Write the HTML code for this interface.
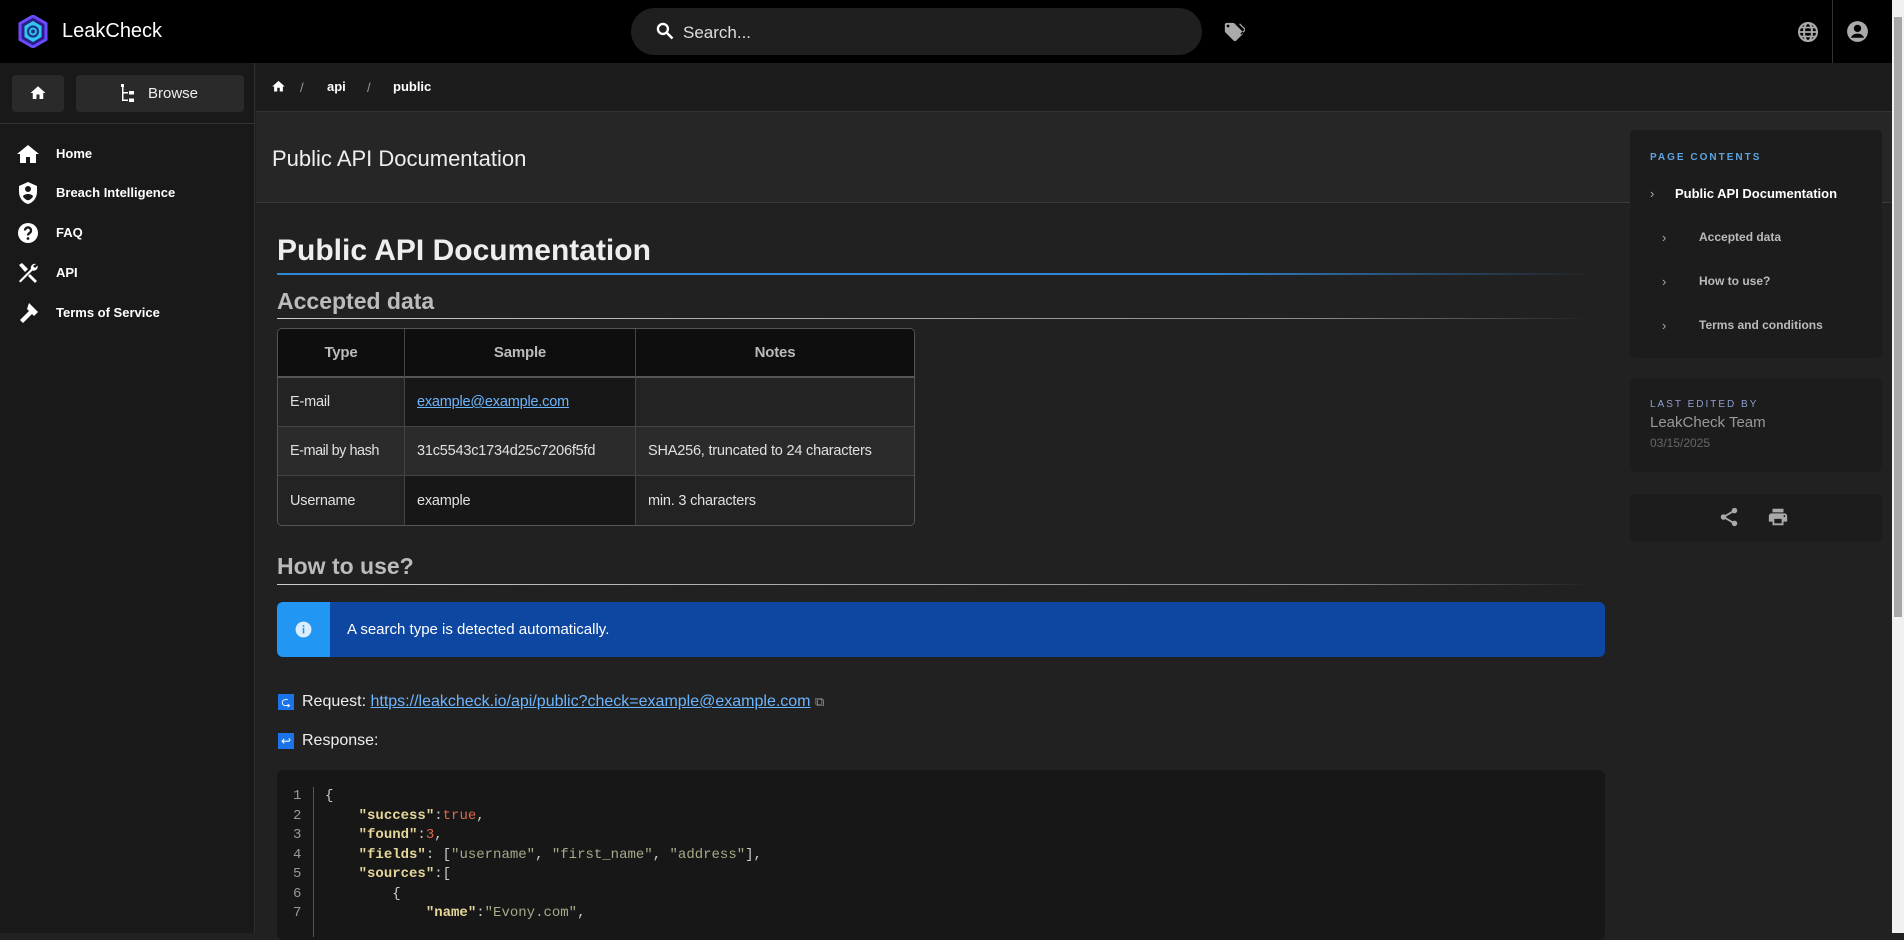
<!DOCTYPE html><html><head><meta charset="utf-8"><style>
*{box-sizing:border-box;margin:0;padding:0}
body{width:1904px;height:933px;overflow:hidden;background:#212121;font-family:"Liberation Sans",sans-serif;color:#e0e0e0;position:relative}
.abs{position:absolute}
#top{left:0;top:0;width:1892px;height:63px;background:#000}
#sb{left:0;top:63px;width:255px;height:870px;background:#191919;border-right:1px solid #2e2e2e}
.nav{position:absolute;left:0;font-size:13px;font-weight:bold;color:#fff}
.nav svg{position:absolute;left:16px;top:-4px}
.nav span{position:absolute;left:56px;top:0;white-space:nowrap}
#crumb{left:256px;top:63px;width:1636px;height:49px;background:#1c1c1c;border-bottom:1px solid #333}
#hdr{left:256px;top:112px;width:1636px;height:91px;background:#262626;border-bottom:1px solid #3a3a3a}
table{border-collapse:separate;border-spacing:0;font-size:14.5px;table-layout:fixed}
td,th{border-right:1px solid #444;border-bottom:1px solid #444;padding:0 12px;height:49px;text-align:left;white-space:nowrap;overflow:hidden;letter-spacing:-0.2px}
th{text-align:center;background:#0e0e0e;color:#bbb;font-weight:bold;font-size:15px;border-bottom:2px solid #555}
.card{background:#1c1c1c;border-radius:5px;left:1630px;width:252px}
.code{font-family:"Liberation Mono",monospace;font-size:14px;line-height:19.5px;white-space:pre}
.k{color:#e6d79a;font-weight:bold}.s{color:#a8a88a}.n{color:#d9684a}
</style></head><body>
<div id="top" class="abs">
<svg class="abs" style="left:18px;top:15px" width="30" height="33" viewBox="0 0 30 33"><polygon points="15,1 28,8.5 28,24.5 15,32 2,24.5 2,8.5" fill="#2a1f88" stroke="#6a4cff" stroke-width="3"/><polygon points="15,6 23.5,11 23.5,22 15,27 6.5,22 6.5,11" fill="#35c4f0"/><circle cx="15" cy="16.5" r="5" fill="none" stroke="#173a8a" stroke-width="2.2"/><circle cx="15" cy="16.5" r="2" fill="#173a8a"/></svg>
<div class="abs" style="left:62px;top:20px;font-size:20px;color:#fff">LeakCheck</div>
<div class="abs" style="left:631px;top:8px;width:571px;height:47px;border-radius:24px;background:#1f1f1f"></div>
<svg class="abs" style="left:655px;top:21px" width="20" height="20" viewBox="0 0 24 24"><circle cx="9.5" cy="9.5" r="6" fill="none" stroke="#fff" stroke-width="2.8"/><path d="M14 14l7 7" stroke="#fff" stroke-width="3"/></svg>
<div class="abs" style="left:683px;top:23px;font-size:17px;color:#ddd">Search...</div>
<svg class="abs" style="left:1223px;top:21px" width="22" height="22" viewBox="0 0 24 24"><path fill="#aaa" d="M5.5 7A1.5 1.5 0 0 1 4 5.5 1.5 1.5 0 0 1 5.5 4 1.5 1.5 0 0 1 7 5.5 1.5 1.5 0 0 1 5.5 7m15.910 4.58-9-9C12.05 2.22 11.550 2 11 2H4c-1.11 0-2 .89-2 2v7c0 .55.22 1.05.59 1.41l8.99 9c.37.36.87.59 1.42.59s1.05-.23 1.41-.59l7-7c.37-.36.59-.86.59-1.41 0-.56-.23-1.06-.59-1.42M17.54 3.54l1-1 6.87 6.88-5.41 5.41-1-1 4.42-4.41z"/></svg>
<svg class="abs" style="left:1796px;top:20px" width="24" height="24" viewBox="0 0 24 24"><circle cx="12" cy="12" r="9" fill="none" stroke="#aaa" stroke-width="2"/><ellipse cx="12" cy="12" rx="4" ry="9" fill="none" stroke="#aaa" stroke-width="2"/><path d="M3 12h18M4.5 7.5h15M4.5 16.5h15" stroke="#aaa" stroke-width="1.8"/></svg>
<div class="abs" style="left:1832px;top:0;width:1px;height:63px;background:#333"></div>
<svg class="abs" style="left:1845px;top:19px" width="25" height="25" viewBox="0 0 24 24"><circle cx="12" cy="12" r="10" fill="#aaa"/><circle cx="12" cy="9" r="3.5" fill="#000"/><path d="M5.5 18c1.5-3 4-4 6.5-4s5 1 6.5 4" fill="#000"/></svg>
</div>
<div class="abs" style="left:1892px;top:0;width:12px;height:933px;background:#f1f1f1"><div style="margin:17px 2px 0;height:600px;background:#a8a8a8"></div></div>
<div id="sb" class="abs">
<div class="abs" style="left:12px;top:12px;width:52px;height:37px;background:#2a2a2a;border-radius:4px"></div>
<svg class="abs" style="left:29px;top:21px" width="18" height="18" viewBox="0 0 24 24"><path fill="#fff" d="M10 20v-6h4v6h5v-8h3L12 3 2 12h3v8z"/></svg>
<div class="abs" style="left:76px;top:12px;width:168px;height:37px;background:#2a2a2a;border-radius:4px"></div>
<svg class="abs" style="left:120px;top:21px" width="18" height="20" viewBox="0 0 18 20"><rect x="1" y="0" width="3" height="3" fill="#fff"/><rect x="2" y="3" width="1.5" height="14" fill="#fff"/><rect x="2" y="8" width="6" height="1.5" fill="#fff"/><rect x="2" y="15.5" width="6" height="1.5" fill="#fff"/><rect x="9" y="7" width="5" height="3.5" fill="#fff"/><rect x="9" y="14.5" width="5" height="3.5" fill="#fff"/></svg>
<div class="abs" style="left:148px;top:22px;font-size:15px;color:#eee">Browse</div>
<div class="abs" style="left:0;top:60px;width:255px;height:1px;background:#333"></div>
<div class="nav" style="top:83px"><svg width="24" height="24" viewBox="0 0 24 24"><path fill="#fff" d="M12 3 1 12h3v9h6v-6h4v6h6v-9h3z"/></svg><span>Home</span></div>
<div class="nav" style="top:122px"><svg width="24" height="24" viewBox="0 0 24 24"><path fill="#fff" d="M12 1 3 5v6c0 5.5 3.8 10.7 9 12 5.2-1.3 9-6.5 9-12V5zm0 4a3 3 0 1 1 0 6 3 3 0 0 1 0-6m0 8c2.5 0 5 1.2 5 2.5-1.2 2-3 3.3-5 3.9-2-.6-3.8-1.9-5-3.9 0-1.3 2.5-2.5 5-2.5"/></svg><span>Breach Intelligence</span></div>
<div class="nav" style="top:162px"><svg width="24" height="24" viewBox="0 0 24 24"><circle cx="12" cy="12" r="10" fill="#fff"/><path d="M9 9.5a3 3 0 1 1 4.5 2.6c-1 .6-1.5 1.1-1.5 2.4" fill="none" stroke="#191919" stroke-width="2.3"/><circle cx="12" cy="17.5" r="1.4" fill="#191919"/></svg><span>FAQ</span></div>
<div class="nav" style="top:202px"><svg width="24" height="24" viewBox="0 0 24 24"><path fill="#fff" d="M3 4l3-2 6 6-3 3zM14 13l7 7-2 2-7-7zM20 3a4 4 0 0 0-5 5L3 20l1.5 1.5L16.5 9.5a4 4 0 0 0 5-5l-2.5 2.5-2-2z"/></svg><span>API</span></div>
<div class="nav" style="top:242px"><svg width="24" height="24" viewBox="0 0 24 24"><path fill="#fff" d="M13 2l9 9-4 4-2-2-9 9-3-3 9-9-2-2z"/></svg><span>Terms of Service</span></div>
</div>
<div id="crumb" class="abs">
<svg class="abs" style="left:15px;top:16px" width="15" height="15" viewBox="0 0 24 24"><path fill="#fff" d="M10 20v-6h4v6h5v-8h3L12 3 2 12h3v8z"/></svg>
<div class="abs" style="left:44px;top:17px;font-size:13px;color:#999">/</div>
<div class="abs" style="left:71px;top:16px;font-size:13px;font-weight:bold;color:#fff">api</div>
<div class="abs" style="left:111px;top:17px;font-size:13px;color:#999">/</div>
<div class="abs" style="left:137px;top:16px;font-size:13px;font-weight:bold;color:#fff">public</div>
</div>
<div id="hdr" class="abs"><div class="abs" style="left:16px;top:34px;font-size:22px;color:#eee">Public API Documentation</div></div>
<div class="abs" style="left:277px;top:234px;font-size:30px;font-weight:bold;color:#eee">Public API Documentation</div>
<div class="abs" style="left:277px;top:273px;width:1313px;height:2px;background:linear-gradient(90deg,#2f86d6,#2f86d6 70%,#222)"></div>
<div class="abs" style="left:277px;top:288px;font-size:23px;font-weight:bold;color:#bbb">Accepted data</div>
<div class="abs" style="left:277px;top:318px;width:1313px;height:1px;background:linear-gradient(90deg,#ccc,#888 80%,#222)"></div>
<div class="abs" style="left:277px;top:328px;width:638px;border:1px solid #555;border-radius:5px;overflow:hidden">
<table style="width:636px"><colgroup><col style="width:127px"><col style="width:231px"><col style="width:278px"></colgroup><tr><th>Type</th><th>Sample</th><th style="border-right:0">Notes</th></tr>
<tr><td style="background:#232323">E-mail</td><td style="background:#171717"><span style="color:#6cb6ff;text-decoration:underline">example@example.com</span></td><td style="background:#232323;border-right:0"></td></tr>
<tr style="background:#2b2b2b"><td style="letter-spacing:-0.5px">E-mail by hash</td><td>31c5543c1734d25c7206f5fd</td><td style="border-right:0">SHA256, truncated to 24 characters</td></tr>
<tr><td style="background:#232323;border-bottom:0">Username</td><td style="background:#171717;border-bottom:0">example</td><td style="background:#232323;border:0">min. 3 characters</td></tr></table></div>
<div class="abs" style="left:277px;top:553px;font-size:23px;font-weight:bold;color:#bbb">How to use?</div>
<div class="abs" style="left:277px;top:584px;width:1313px;height:1px;background:linear-gradient(90deg,#ccc,#888 80%,#222)"></div>
<div class="abs" style="left:277px;top:602px;width:1328px;height:55px;border-radius:6px;background:#0d47a1;overflow:hidden"><div style="width:53px;height:55px;background:#2196f3"></div></div>
<svg class="abs" style="left:294px;top:620px" width="19" height="19" viewBox="0 0 24 24"><circle cx="12" cy="12" r="10" fill="#dbeeff"/><rect x="11" y="10" width="2" height="7" fill="#2196f3"/><circle cx="12" cy="7.5" r="1.2" fill="#2196f3"/></svg>
<div class="abs" style="left:347px;top:621px;font-size:15px;color:#fff">A search type is detected automatically.</div>
<div class="abs" style="left:278px;top:694px;width:16px;height:16px;background:#1a73e8;color:#fff;font-size:12px;text-align:center;line-height:16px">⮎</div>
<div class="abs" style="left:302px;top:693px;font-size:16px;color:#eee">Request: <span style="color:#6cb6ff;text-decoration:underline">https://leakcheck.io/api/public?check=example@example.com</span> <span style="color:#999;font-size:13px">⧉</span></div>
<div class="abs" style="left:278px;top:733px;width:16px;height:16px;background:#1a73e8;color:#fff;font-size:12px;text-align:center;line-height:16px">↩</div>
<div class="abs" style="left:302px;top:732px;font-size:16px;color:#eee">Response:</div>
<div class="abs" style="left:277px;top:770px;width:1328px;height:170px;background:#171717;border-radius:6px"></div>
<div class="abs" style="left:313px;top:787px;width:1px;height:150px;background:#555"></div>
<div class="abs code" style="left:293px;top:787px;color:#999">1
2
3
4
5
6
7</div>
<div class="abs code" style="left:325px;top:787px;color:#ccc">{
    <span class="k">"success"</span>:<span class="n">true</span>,
    <span class="k">"found"</span>:<span class="n">3</span>,
    <span class="k">"fields"</span>: [<span class="s">"username"</span>, <span class="s">"first_name"</span>, <span class="s">"address"</span>],
    <span class="k">"sources"</span>:[
        {
            <span class="k">"name"</span>:<span class="s">"Evony.com"</span>,</div>
<div class="abs card" style="top:130px;height:228px">
<div class="abs" style="left:20px;top:22px;font-size:10px;letter-spacing:2px;color:#5ea3e0;font-weight:bold">PAGE CONTENTS</div>
<div class="abs" style="left:20px;top:56px;font-size:13px;color:#aaa">›</div>
<div class="abs" style="left:45px;top:56px;font-size:13px;font-weight:bold;color:#fff">Public API Documentation</div>
<div class="abs" style="left:32px;top:100px;font-size:13px;color:#aaa">›</div>
<div class="abs" style="left:69px;top:100px;font-size:12px;font-weight:bold;color:#bbb">Accepted data</div>
<div class="abs" style="left:32px;top:144px;font-size:13px;color:#aaa">›</div>
<div class="abs" style="left:69px;top:144px;font-size:12px;font-weight:bold;color:#bbb">How to use?</div>
<div class="abs" style="left:32px;top:188px;font-size:13px;color:#aaa">›</div>
<div class="abs" style="left:69px;top:188px;font-size:12px;font-weight:bold;color:#bbb">Terms and conditions</div>
</div>
<div class="abs card" style="top:379px;height:93px">
<div class="abs" style="left:20px;top:20px;font-size:10px;letter-spacing:2px;color:#8fa0d0">LAST EDITED BY</div>
<div class="abs" style="left:20px;top:35px;font-size:15px;color:#999">LeakCheck Team</div>
<div class="abs" style="left:20px;top:57px;font-size:12px;color:#666">03/15/2025</div>
</div>
<div class="abs card" style="top:494px;height:47px">
<svg class="abs" style="left:88px;top:12px" width="22" height="22" viewBox="0 0 24 24"><circle cx="18" cy="5" r="3" fill="#aaa"/><circle cx="6" cy="12" r="3" fill="#aaa"/><circle cx="18" cy="19" r="3" fill="#aaa"/><path d="M6 12l12-7M6 12l12 7" stroke="#aaa" stroke-width="2"/></svg>
<svg class="abs" style="left:137px;top:12px" width="22" height="22" viewBox="0 0 24 24"><path fill="#aaa" d="M19 8H5c-1.66 0-3 1.34-3 3v6h4v4h12v-4h4v-6c0-1.66-1.34-3-3-3m-3 11H8v-5h8zm3-7c-.55 0-1-.45-1-1s.45-1 1-1 1 .45 1 1-.45 1-1 1m-1-9H6v4h12z"/></svg>
</div>
</body></html>
